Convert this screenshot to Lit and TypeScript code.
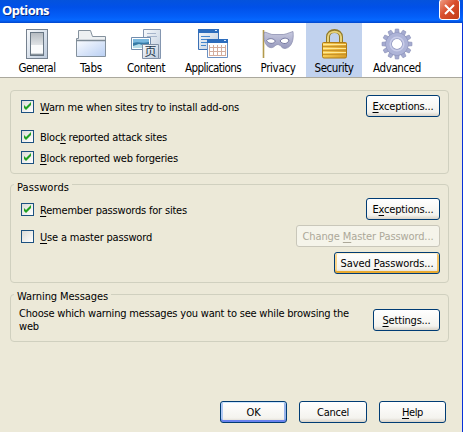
import { LitElement, html, css, svg } from "lit";
import { customElement, property } from "lit/decorators.js";

/** A line of text tracked to occupy a given width; "_" marks the access key. */
@customElement("fit-text")
class FitText extends LitElement {
  @property() text = "";
  @property({ type: Number }) w = 0;
  static styles = css`
    :host { display: inline-block; white-space: pre; }
    .t { display: inline-block; }
    .k { text-decoration: underline; text-underline-offset: 2px; text-decoration-thickness: 1px; text-decoration-skip-ink: none; }
  `;
  updated() {
    const el = this.renderRoot.querySelector(".t") as HTMLElement;
    el.style.letterSpacing = "0px";
    const n = this.text.replace("_", "").length;
    const gap = (this.w - el.getBoundingClientRect().width) / n;
    el.style.letterSpacing = gap.toFixed(3) + "px";
  }
  render() {
    const i = this.text.indexOf("_");
    return i < 0
      ? html`<span class="t">${this.text}</span>`
      : html`<span class="t">${this.text.slice(0, i)}<span class="k">${this.text[i + 1]}</span>${this.text.slice(i + 2)}</span>`;
  }
}

const icons: Record<string, unknown> = {
  General: svg`<rect x="5.500" y="1.500" width="21" height="29" fill="url(#gA)" stroke="#75818f"/><rect x="9.500" y="4.500" width="13" height="23" fill="#d4d9dd" stroke="#687684"/><rect x="10" y="5" width="12" height="12" fill="url(#gB)"/><rect x="10" y="17" width="12" height="8" fill="#fafbfc"/><path d="M10 26.500h12" stroke="#8b949c"/>`,
  Tabs: svg`<path d="M1.500 12.500V10.500H3.500V2.500H15.500L17.500 8.500H30.500V12.500" fill="#edf0f2" stroke="#84919d"/><path d="M1.500 12.500h29v16h-29z" fill="url(#gT)" stroke="#84919d"/><path d="M1 12.500h30" stroke="#7d8a95" stroke-width="1.500"/>`,
  Content: svg`<path d="M13.500 1.500h17v29h-17z" fill="url(#gA)" stroke="#8496b0"/><path d="M17 5.500h9M17 8.500h10" stroke="#a7b5cb"/><path d="M1.500 9.500h19v12h-19z" fill="#fff" stroke="#728dad"/><path d="M3 11h16v9H3z" fill="#79b8df"/><path d="M3 15c5-2 9 1 16-1v6H3z" fill="#367aa6"/><path d="M3 18l6-2 10 3v1H3z" fill="#b8ddea"/><path d="M12.500 16.500h16v14h-16z" fill="url(#gA)" stroke="#8190a5"/><text class="glyph" x="14.500" y="28">页</text>`,
  Applications: svg`<path d="M1.500 1.500h20v20h-20z" fill="url(#gA)" stroke="#3b70b5"/><path d="M1 1h21v4H1z" fill="#2d6dbd"/><path d="M18 2.500h2" stroke="#d5e5fa"/><path d="M4 8.500h9M4 11.500h8M4 14.500h6M4 17.500h5" stroke="#4587ce"/><path d="M10.500 11.500h20v18h-20z" fill="#fff" stroke="#6d91c2"/><path d="M10 11h21v4H10z" fill="#2d6dbd"/><path d="M27 12.500h2" stroke="#d5e5fa"/><path d="M12.500 17v11M16.500 17v11M20.500 17v11M24.500 17v11M28.500 17v11M13 19.500h16M13 23.500h16M13 27.500h16" stroke="#d4ad9d"/>`,
  Privacy: svg`<path d="M1.500 2v28" stroke="#b39a4c" stroke-width="1.600"/><path d="M2.500 4C7 5 9 7 12 6.500h7C23 7 26 5 31 3.500c1 8-1 16-8 17-4 0-4-4-7-4s-4 4-8 3C3 18 1 11 2.500 4z" fill="url(#gM)" stroke="#8e90b1" stroke-width=".8"/><path d="M4.500 12.500c3-3 7-2 9 .5-2 3.500-7 3-9-.5zM18 13c2-3 6-4 9-1-1 4-6 5-9 1z" fill="#fff" stroke="#7679a0"/>`,
  Security: svg`<path d="M10 16V9c0-8 13-8 13 0v7" fill="none" stroke="#927a28" stroke-width="4"/><path d="M10 16V9c0-7 13-7 13 0v7" fill="none" stroke="#e7d27b" stroke-width="2"/><path d="M5.500 14.500h22q1 0 1 1v13q0 1.500-1.500 1.500H6q-1.500 0-1.500-1.500v-13q0-1 1-1z" fill="url(#gL)" stroke="#ad7b16"/><path d="M5 16.500h23M5 20.500h23M5 24.500h23" stroke="#ffe997"/><path d="M5 18.500h23M5 22.500h23M5 26.500h23" stroke="#c8932a"/>`,
  Advanced: svg`${Array.from({ length: 12 }, (_, i) => svg`<path d="M13.700 6l.6-5h3.400l.6 5z" transform="rotate(${i * 30} 16 16)" fill="#a5abd0" stroke="#8b91b8" stroke-width=".6"/>`)}<circle cx="16" cy="16" r="8.300" fill="none" stroke="#8c92b9" stroke-width="6.400"/><circle cx="16" cy="16" r="8.300" fill="none" stroke="#aeb4d8" stroke-width="5.400"/><circle cx="16" cy="16" r="6.800" fill="none" stroke="#c9cde9" stroke-width="1.500"/>`,
};

// name, label width, tab width
const tabs: [string, number, number][] = [
  ["General", 37, 50], ["Tabs", 22, 58], ["Content", 38, 52], ["Applications", 56, 82],
  ["Privacy", 35, 48], ["Security", 39, 56], ["Advanced", 48, 70],
];

@customElement("app-root")
class AppRoot extends LitElement {
  static styles = css`
    * { box-sizing: border-box; }
    :host { display: flex; flex-direction: column; width: 463px; height: 434px; background: #fff; color: #000; font: 11px/13px "DejaVu Sans Condensed", "DejaVu Sans", sans-serif; overflow: hidden; }
    .window { width: 463px; height: 432px; border-right: 1px solid #0831d9; display: flex; flex-direction: column; background: #ece9d8; }
    .title { height: 23px; flex: none; width: 463px; display: flex; justify-content: space-between; background: linear-gradient(#0453dd, #0050e8 30%, #0460fa 75%, #0668ff 87%, #0046cc); }
    .title b { color: #fff; font: bold 13px/20px "Noto Sans", sans-serif; text-shadow: 1px 1px #072b83; padding-left: 2px; }
    .close { width: 21px; height: 21px; margin-right: 3px; margin-top: -1px; border: 1px solid #fff; border-radius: 3px; background: linear-gradient(135deg, #ef9b82, #d94e2d 45%, #c23d18); }
    .close svg { display: block; width: 19px; height: 19px; }
    .tabs { height: 55px; flex: none; display: flex; background: #fff; border-bottom: 1px solid #aaa89d; padding-left: 12px; }
    .tab { height: 54px; display: flex; flex-direction: column; align-items: center; padding-top: 5px; }
    .tab.on { background: #c1d2ee; margin-left: 4px; }
    .icon { width: 32px; height: 32px; display: block; flex: none; }
    .tab fit-text { margin-top: 2px; font-size: 11.500px; }
    .glyph { font: 12px "Noto Sans CJK SC", sans-serif; fill: #26384b; }
    .body { flex: 1; display: flex; flex-direction: column; padding: 12px 13px 9px 10px; }
    .group { border: 1px solid #d0d0bf; border-radius: 4px; display: flex; justify-content: space-between; flex: none; width: 439px; }
    .g1 { height: 84px; padding: 4px 8px 0 10px; }
    .g2 { height: 99px; margin-top: 10px; padding: 0 8px 0 10px; }
    .g3 { height: 48px; margin-top: 11px; padding: 0 8px 0 8px; }
    .legend { display: block; height: 14px; margin: -4px 0 0 -7px; padding: 0 3px; background: #ece9d8; width: max-content; }
    .g3 .legend { margin: -5px 0 0 -5px; }
    .check { display: flex; align-items: center; gap: 6px; height: 15px; }
    .check fit-text { padding-top: 2px; }
    .box { width: 13px; height: 13px; border: 1px solid #1c5180; background: linear-gradient(135deg, #dcdcd7, #fff); flex: none; }
    .box svg { display: block; width: 11px; height: 11px; }
    .buttons { display: flex; flex-direction: column; align-items: flex-end; }
    .g2 .buttons { padding-top: 13px; gap: 5px; }
    .g3 .buttons { padding-top: 14px; }
    .btn { height: 22px; border: 1px solid #003c74; border-radius: 3px; background: linear-gradient(#fff, #f4f3ee 80%, #d9d3c8); display: flex; align-items: center; justify-content: center; flex: none; }
    .btn.off { color: #aca899; border-color: #c9c7ba; background: #f5f4ea; }
    .btn.hot { box-shadow: inset 0 -2px #e9aa30, inset 0 1px #fff0cf, inset 2px 0 #fbd58b, inset -2px 0 #f5c467; }
    .btn.def { box-shadow: inset 0 -2px #6982ee, inset 0 1px #cee7ff, inset 2px 0 #b1caf5, inset -2px 0 #97b3ea; }
    .footer { display: flex; justify-content: flex-end; gap: 12px; margin-top: auto; margin-right: 3px; }
    .c1 { margin-top: 4px; } .c2 { margin-top: 15px; } .c3 { margin-top: 6px; }
    .c4 { margin-top: 7px; } .c5 { margin-top: 12px; }
    .msg { display: block; }
    .msg.first { margin-top: 3px; }
  `;
  check(cls: string, text: string, w: number, on = true) {
    return html`<div class="check ${cls}"><span class="box">${on ? html`<svg viewBox="0 0 11 11"><path d="M2 4v3l2 2 5-5V1L4 6z" fill="#21a121"/></svg>` : ""}</span><fit-text .text=${text} .w=${w}></fit-text></div>`;
  }
  button(text: string, w: number, width: number, cls = "") {
    return html`<div class="btn ${cls}" style="width:${width}px"><fit-text .text=${text} .w=${w}></fit-text></div>`;
  }
  render() {
    return html`<div class="window">
      <div class="title"><b><fit-text .text=${"Options"} .w=${47}></fit-text></b>
        <div class="close"><svg viewBox="0 0 19 19"><path d="M5 5l9 9M14 5l-9 9" stroke="#fff" stroke-width="2"/></svg></div></div>
      <div class="tabs">${tabs.map(([name, w, width]) => html`<div class="tab ${name === "Security" ? "on" : ""}" style="width:${width}px">
        <svg class="icon" viewBox="0 0 32 32"><defs>
          <linearGradient id="gA" x2="1" y2="1"><stop stop-color="#f8fafc"/><stop offset="1" stop-color="#bdcbdd"/></linearGradient>
          <linearGradient id="gB" x2="0" y2="1"><stop stop-color="#b5bbc1"/><stop offset="1" stop-color="#e0e3e6"/></linearGradient>
          <linearGradient id="gT" x2="1" y2="1"><stop stop-color="#fafcff"/><stop offset="1" stop-color="#b9cff3"/></linearGradient>
          <linearGradient id="gM" x2="0" y2="1"><stop stop-color="#c9cbe0"/><stop offset="1" stop-color="#9799bd"/></linearGradient>
          <linearGradient id="gL" x2="1" y2="0"><stop stop-color="#f8ce55"/><stop offset="1" stop-color="#d99c25"/></linearGradient>
        </defs>${icons[name]}</svg>
        <fit-text .text=${name} .w=${w}></fit-text></div>`)}</div>
      <div class="body">
        <div class="group g1"><div>
          ${this.check("c1", "_Warn me when sites try to install add-ons", 199)}
          ${this.check("c2", "Bloc_k reported attack sites", 127)}
          ${this.check("c3", "_Block reported web forgeries", 138)}
        </div><div class="buttons">${this.button("_Exceptions...", 61, 74)}</div></div>
        <div class="group g2"><div>
          <span class="legend"><fit-text .text=${"Passwords"} .w=${52}></fit-text></span>
          ${this.check("c4", "_Remember passwords for sites", 147)}
          ${this.check("c5", "_Use a master password", 112, false)}
        </div><div class="buttons">${this.button("E_xceptions...", 61, 74)}${this.button("Change _Master Password...", 131, 144, "off")}${this.button("Saved _Passwords...", 93, 106, "hot")}</div></div>
        <div class="group g3"><div>
          <span class="legend"><fit-text .text=${"Warning Messages"} .w=${91}></fit-text></span>
          <fit-text class="msg first" .text=${"Choose which warning messages you want to see while browsing the"} .w=${330}></fit-text>
          <fit-text class="msg" .text=${"web"} .w=${20}></fit-text>
        </div><div class="buttons">${this.button("_Settings...", 48, 67)}</div></div>
        <div class="footer">${this.button("OK", 14, 67, "def")}${this.button("Cancel", 32, 68)}${this.button("_Help", 21, 67)}</div>
      </div>
    </div>`;
  }
}
